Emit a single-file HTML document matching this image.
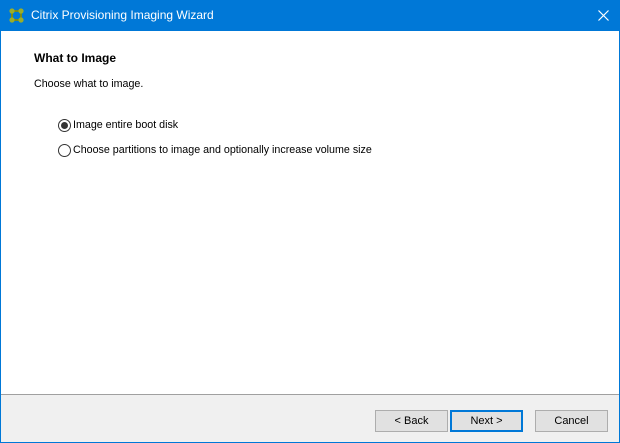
<!DOCTYPE html>
<html><head><style>
*{margin:0;padding:0;box-sizing:border-box}
body{width:620px;height:443px;overflow:hidden;background:#0078d7;font-family:"Liberation Sans",sans-serif;font-size:12px;color:#000;position:relative}
.title{position:absolute;left:0;top:0;width:620px;height:31px;background:#0078d7;color:#fff;font-size:12px}
.title span{position:absolute;left:31px;top:8px}
.client{position:absolute;left:1px;top:31px;width:618px;height:411px;background:#f0f0f0}
.white{position:absolute;left:0;top:0;width:618px;height:364px;background:#fff;border-bottom:1px solid #a0a0a0}
.t{position:absolute;white-space:nowrap;font-size:10.7px}
.radio{position:absolute;width:13px;height:13px;border:1px solid #333;border-radius:50%;background:#fff}
.radio.on::after{content:"";position:absolute;left:2px;top:2px;width:7px;height:7px;border-radius:50%;background:#333}
.btn{position:absolute;top:379px;height:22px;width:73px;background:#e1e1e1;border:1px solid #adadad;text-align:center;line-height:20px;font-size:11px}
.btn.def{border:2px solid #0078d7;line-height:18px}
</style></head><body>
<div class="title">
<svg style="position:absolute;left:9px;top:8px" width="15" height="15" viewBox="0 0 15 15">
<g stroke="#7a8a1a" stroke-width="2"><line x1="3" y1="3" x2="12" y2="3"/><line x1="3" y1="12" x2="12" y2="12"/><line x1="3" y1="3" x2="3" y2="12"/><line x1="12" y1="3" x2="12" y2="12"/></g>
<g fill="#9aae2a"><circle cx="3" cy="3" r="2.6"/><circle cx="12" cy="3" r="2.6"/><circle cx="3" cy="12" r="2.6"/><circle cx="12" cy="12" r="2.6"/></g></svg>
<span>Citrix Provisioning Imaging Wizard</span>
<svg style="position:absolute;left:598px;top:10px" width="11" height="11" viewBox="0 0 11 11"><path d="M0.5 0.5L10.5 10.5M10.5 0.5L0.5 10.5" stroke="#fff" stroke-width="1.2"/></svg>
</div>
<div class="client">
<div class="white">
<div class="t" style="left:33px;top:20px;font-weight:bold;font-size:12px">What to Image</div>
<div class="t" style="left:33px;top:47px">Choose what to image.</div>
<div class="radio on" style="left:57px;top:88px"></div>
<div class="t" style="left:72px;top:88px">Image entire boot disk</div>
<div class="radio" style="left:57px;top:113px"></div>
<div class="t" style="left:72px;top:113px">Choose partitions to image and optionally increase volume size</div>
</div>
<div class="btn" style="left:374px">&lt; Back</div>
<div class="btn def" style="left:449px">Next &gt;</div>
<div class="btn" style="left:534px">Cancel</div>
</div>
</body></html>
